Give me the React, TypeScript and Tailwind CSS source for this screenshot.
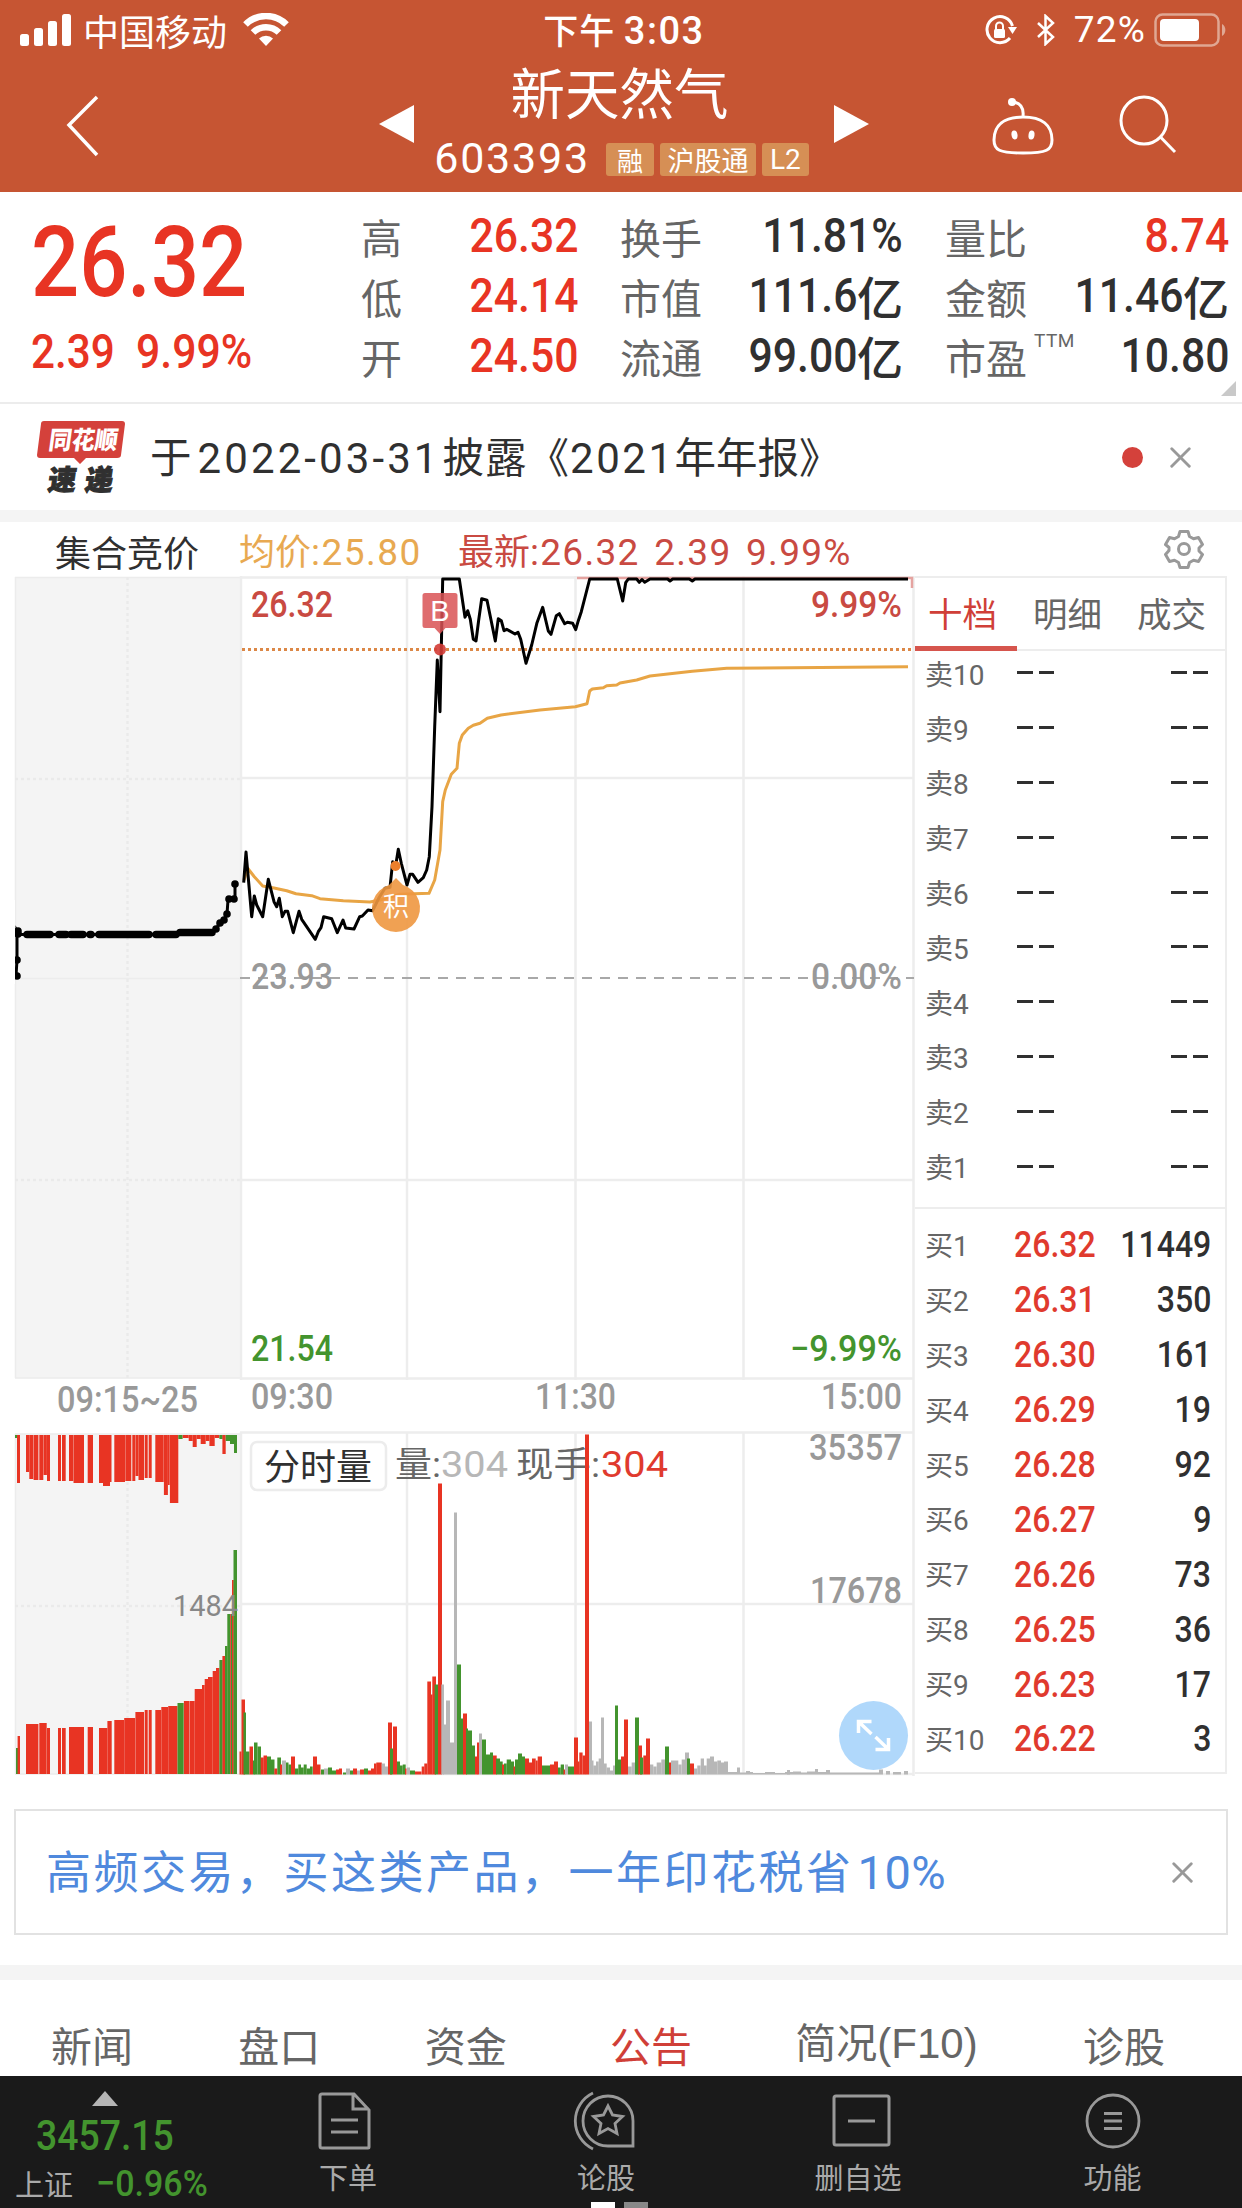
import type { ReactNode } from 'react';
import { X } from 'lucide-react';

type Bar = [x: number, width: number, height: number, color: string];

const RED = '#e83423';
const GREEN = '#43942e';
const GRAY = '#b7b7b7';

const pricePoints =
    '243.7,882.7 246,852 251.7,916.7 254.3,896 256.7,905 262.7,916.7 268.3,879.3 274,901.7 276.7,906.7 279.3,898.3 282.3,916.7 285,911.3 287.7,911.3 293.3,932.7 299,911.3 301.7,919.3 315.3,939.3 318.3,931.7 321,927.7 323.7,916.7 331.7,918.7 337.3,932.7 343,920 345.7,928 354,929 359.7,916.7 362.3,916 368,910 372.7,910.7 378.7,898.3 385,888.3 390,887.3 392.7,861.7 395.3,868 398.3,849.3 401.3,863.3 407,885 410,874.3 412.7,874.3 418,882.3 423.3,877.7 426.7,870 429.3,856.7 432,806.7 434.7,726.7 437.3,660 440,711.7 442.7,579 459.3,579 465,617.3 467.7,610.7 470.3,619.3 473.3,639.3 476,641 478.7,620 481.7,598.7 487,600.3 495.3,641 498.3,618.7 501.3,620.7 504,630.7 506.7,629.3 515,634 518,632.3 520.7,639.3 526,663.3 531.7,645 537,622.7 542.7,607.3 548.3,631 551,634.3 556.3,615.7 559.3,613.7 564.7,623.7 567.3,622.3 572.7,623.3 575.7,629.7 578.3,620.7 581.3,611.7 589.7,579 617.3,579 622.7,601 625.7,582.7 628.3,579 636.7,579 639.3,582.3 642,579.5 644.7,582.3 650,579 667.7,579 670,581 672.7,579 689.3,579 692.3,581 695,579 908,579';

const averagePoints =
    '244,880 247.7,868.3 254.3,876.7 262.7,886 274,888 286.7,890.7 296,893.7 311.7,895.7 320,898.7 343.3,900.7 370,902 380,900 400,894.3 429,893.3 434.7,880 440,850 442.7,801.7 445.3,790 451.3,774.3 457,768.3 459.3,743.3 462.3,735 468.3,728.3 473.3,725.3 480,723.3 487.3,718.3 501,715 540,710 575.3,706.7 587,703.7 589.7,691 592.3,689 603.3,687.7 606.7,685.7 616.7,685 620,683 636.7,680 650,676 692.3,671.3 726.7,668.3 908,666.7';

const auctionPoints = '16,976 17,960 17,931 19,934.5 179,934.5 181,932.5 212,932.5 218,926 224,920 227,914 228,900 235,899 235,884';
const auctionThick = [
    [25, 52, 934.5], [57, 68, 934.5], [69, 85, 934.5], [88, 93, 934.5], [97, 151, 934.5], [154, 178, 934.5], [178, 214, 932.5],
];
const auctionDots = [[17, 976], [17, 960], [18, 931], [18, 934], [216, 929], [220, 923], [224, 920], [227, 914], [229, 899], [234, 899], [235, 884]];

// one bar per minute, measured from the bottom of the pane
const volumeBars: Bar[] = [
    [239.5, 2, 23, RED], [241.5, 3.5, 75, RED], [243.5, 2.5, 62, GREEN], [246, 3.5, 23, GREEN], [249.5, 3.5, 28, RED],
    [253, 1.5, 14, GREEN], [254, 3.5, 32, GREEN], [257.5, 3.5, 28, GREEN], [260.7, 3, 17, RED], [263.5, 3.5, 19, RED],
    [267, 4, 18, GREEN], [271, 3.5, 15, GREEN], [274.3, 3, 6, RED], [277.3, 3.7, 17, GREEN], [280, 2, 10, RED],
    [282, 4, 14, GRAY], [286, 2.5, 12, GREEN], [288.5, 2.5, 10, GREEN], [291, 4, 18, RED], [295, 3.3, 6, GREEN],
    [298.3, 2.7, 10, GREEN], [301, 2.7, 7, GREEN], [303.7, 3, 10, GREEN], [306.7, 3.3, 6, GREEN], [310, 2.7, 8, GREEN],
    [313, 4, 18, RED], [317, 3.5, 10, RED], [321, 3, 5, GREEN], [324, 4, 6, GRAY], [328, 4, 7, GREEN], [332, 4, 4, GREEN],
    [336, 3, 5, RED], [339, 3, 6, RED], [343, 3, 2, GREEN], [346, 4, 6, GRAY], [350, 3, 4, GREEN], [353, 4, 6, RED],
    [357, 3, 4, GRAY], [360, 4, 5, RED], [364, 4, 6, GREEN], [368, 3, 4, RED], [371, 3, 6, RED], [374, 2.5, 11, RED],
    [376.3, 5.5, 12, RED], [381.7, 3.3, 11, GRAY], [385, 3, 8, GRAY], [388, 4, 52, RED], [390, 3, 26, GREEN],
    [393, 4, 48, RED], [397, 3, 13, GREEN], [400, 2.7, 9, GREEN], [402.7, 3, 10, GREEN], [405, 1.5, 6, RED],
    [407, 3, 7, GRAY], [410, 5, 4, GREEN], [415, 6.5, 3, RED], [421.7, 2.7, 8, RED], [424.3, 3, 11, RED],
    [427.3, 3.7, 93, RED], [431, 1.5, 80, RED], [432.3, 3.7, 98, RED], [434.7, 3.3, 90, GREEN], [438, 4, 291, RED],
    [441.3, 2.7, 90, GRAY], [443, 3, 50, GRAY], [446, 4, 74, GRAY], [450, 4, 32, GRAY], [454, 3, 262, GRAY],
    [457, 4, 110, GREEN], [461, 2.3, 56, GREEN], [463, 4, 61, RED], [466, 2, 46, GREEN], [468, 4, 44, GREEN],
    [472, 3, 29, GREEN], [475, 2.3, 18, RED], [477, 2, 32, RED], [479, 3, 41, GRAY], [482, 4, 35, GREEN],
    [486, 4, 20, GREEN], [490, 3, 22, GREEN], [493, 3.7, 19, RED], [496, 4, 16, GREEN], [500, 2.7, 13, GREEN],
    [502, 2, 10, RED], [504, 2.7, 11, GREEN], [506.7, 4.3, 15, GREEN], [511, 3, 13, GREEN], [513.5, 2, 8, RED],
    [515, 3, 15, GREEN], [518, 4, 21, GREEN], [522, 3, 18, GREEN], [525, 4, 16, RED], [529, 3, 12, RED],
    [532, 3.7, 16, RED], [535.7, 2, 14, RED], [537.7, 4.3, 18, RED], [542, 8, 9, GREEN], [550, 4, 10, RED],
    [554, 4, 13, RED], [558, 2.7, 7, GREEN], [560.7, 3.3, 10, GREEN], [563.5, 2, 5, RED], [565, 3, 10, GRAY],
    [568, 6, 8, GREEN], [574, 4, 37, RED], [578, 1.5, 13, RED], [579.3, 3.3, 22, RED], [582.6, 2.6, 19, RED],
    [585, 4, 340, RED], [589, 3, 53, GRAY], [592, 1.5, 14, GRAY], [593.3, 2.7, 9, GRAY], [596, 2.7, 13, GRAY],
    [598.7, 2.3, 16, GRAY], [601, 3, 57, GRAY], [604, 2.7, 11, GRAY], [606.7, 3.3, 7, GRAY], [610, 4, 4, GRAY],
    [613, 2, 9, GRAY], [615, 3, 69, GREEN], [618, 3, 15, GREEN], [621, 3, 18, RED], [624, 4, 55, RED],
    [628, 3.7, 8, GRAY], [631.7, 3.3, 12, GRAY], [635, 4, 57, GREEN], [638.3, 3.7, 29, RED], [640, 3.3, 17, GREEN],
    [643.3, 2.7, 19, RED], [646, 4, 36, RED], [650, 3.3, 10, GRAY], [653.3, 3.3, 8, GRAY], [656.7, 4.7, 12, GRAY],
    [661.3, 3.7, 15, GRAY], [665, 4, 28, GREEN], [669, 2, 12, RED], [671, 7.3, 14, GRAY], [678.3, 3.3, 10, GRAY],
    [681.7, 3.3, 15, GRAY], [685, 4, 22, GRAY], [687, 3, 16, GREEN], [690, 4, 11, RED], [694, 3.3, 6, GRAY],
    [697.3, 3.3, 9, GRAY], [700.7, 3.3, 16, GRAY], [704, 2.7, 9, GRAY], [706.7, 3.3, 16, GRAY], [710, 4, 18, GRAY],
    [714, 3.3, 13, GRAY], [717.3, 3.7, 14, GRAY], [721, 3, 12, GRAY], [724, 4, 13, GRAY], [728, 9, 2.5, GRAY],
    [737, 3, 7, GRAY], [740, 6, 2, GRAY], [746, 4, 3.5, GRAY], [750, 3, 2.5, GRAY], [753, 12, 1.5, GRAY], [765, 10, 2.5, GRAY],
    [775, 10, 1.5, GRAY], [785, 8, 2.5, GRAY], [787, 3, 4.5, GRAY], [793, 8, 3, GRAY], [801, 6, 2, GRAY], [807, 8, 3, GRAY],
    [815, 3, 5.5, GRAY], [818, 8, 2.5, GRAY], [826, 4, 4.5, GRAY], [830, 12, 2, GRAY], [842, 11, 2, GRAY], [853, 11, 2, GRAY],
    [864, 15, 2, GRAY], [879, 4, 5, GRAY], [886, 4, 3.5, GRAY], [893, 8, 2.5, GRAY], [904, 4, 3.5, GRAY],
];

const auctionUnmatched: Bar[] = [
    [15, 4, 3, GREEN], [17, 3, 48, RED], [26, 3.3, 37, RED], [29.3, 4, 44, RED], [33.6, 4.8, 45, RED], [39.3, 4, 45, RED],
    [43.5, 3.4, 40, RED], [47, 3, 46, RED], [58, 3, 46, RED], [62, 3.7, 46, RED], [69, 4.3, 46, RED], [73.5, 10.5, 48, RED],
    [87.7, 5.3, 48, RED], [99, 4, 48, RED], [103, 7, 51, RED], [110, 1.5, 47, RED], [114.3, 10.7, 47, RED],
    [125.3, 6, 46, RED], [132.3, 3, 46, RED], [135.5, 3, 41, RED], [138.5, 5.5, 45, RED], [144.7, 3, 43, RED],
    [148.7, 3, 43, RED], [155.3, 8.4, 47, RED], [163.9, 4, 60, RED], [168, 1.7, 50, RED], [169.9, 8.4, 68, RED], [178.3, 4.3, 4, GREEN],
    [182.7, 6, 3, RED], [188.7, 4, 6, RED], [192.7, 4, 12, RED], [196.7, 4, 4, RED], [200.7, 5, 9, RED], [205.7, 3.7, 6, RED],
    [209.4, 5.3, 11, RED], [214.7, 4.7, 3, RED], [219.4, 3.3, 4, GREEN], [222.4, 3.3, 19, RED], [225.7, 4.3, 6, GREEN],
    [230, 4, 9, GREEN], [234, 3, 18, GREEN],
];

const auctionMatched: Bar[] = [
    [16, 2, 26, GREEN], [17.6, 2.4, 38, RED], [26, 12.4, 50, RED], [39.3, 7.4, 51, RED], [47, 3, 46, RED], [58, 3, 46, RED],
    [62, 3.7, 46, RED], [69, 15, 47, RED], [87.7, 5.3, 47, RED], [99, 8.4, 46, RED], [107.4, 4.3, 53, RED],
    [114.3, 9.7, 54, RED], [124.2, 11, 56, RED], [135.4, 8.6, 62, RED], [144.7, 3, 64, RED], [148.7, 3, 64, RED],
    [155.3, 5.9, 64, RED], [161.3, 6.7, 67, RED], [168.2, 9.3, 68, RED], [177.5, 6.2, 71, GREEN], [183.9, 5.3, 73, RED],
    [189.5, 5.2, 73, RED], [194.7, 7.3, 85, RED], [202, 2.7, 89, RED], [204.7, 3.3, 95, RED], [208, 4.7, 97, RED],
    [212.7, 3.3, 103, RED], [216, 3.4, 106, RED], [219.4, 3.3, 114, GREEN], [222.4, 3, 118, RED], [225, 2.5, 128, GREEN],
    [227.3, 3, 160, GREEN], [230.2, 1, 160, RED], [231, 1.5, 160, GREEN], [232, 1.8, 194, RED], [233.5, 3.5, 224, GREEN],
];

const metrics = [
    [
        { label: '高', value: '26.32', up: true },
        { label: '低', value: '24.14', up: true },
        { label: '开', value: '24.50', up: true },
    ],
    [
        { label: '换手', value: '11.81%' },
        { label: '市值', value: '111.6', unit: '亿' },
        { label: '流通', value: '99.00', unit: '亿' },
    ],
    [
        { label: '量比', value: '8.74', up: true },
        { label: '金额', value: '11.46', unit: '亿' },
        { label: '市盈', value: '10.80', note: 'TTM' },
    ],
];
const metricWidths = ['w-[217px]', 'w-[283px]', 'w-[284px]'];

const bids = [
    ['26.32', '11449'], ['26.31', '350'], ['26.30', '161'], ['26.29', '19'], ['26.28', '92'],
    ['26.27', '9'], ['26.26', '73'], ['26.25', '36'], ['26.23', '17'], ['26.22', '3'],
];

function Num({ children, className = '' }: { children: ReactNode; className?: string }) {
    return (
        <span className={`inline-block whitespace-nowrap font-['Roboto'] font-medium ${className}`}>{children}</span>
    );
}

function ChartText({ x, y, w, color, size = 36, weight = 500, children }: {
    x: number; y: number; w: number; color: string; size?: number; weight?: number; children: string;
}) {
    return (
        <text x={x} y={y} textLength={w} lengthAdjust="spacingAndGlyphs" fill={color} fontSize={size} fontWeight={weight} fontFamily="Roboto, 'Noto Sans CJK SC', sans-serif">
            {children}
        </text>
    );
}

function StatusBar() {
    return (
        <div className="flex h-[60px] items-center justify-between pl-5 pr-[14px]">
            <div className="flex w-[480px] items-center">
                <svg width="51" height="34" viewBox="0 0 51 34" fill="white">
                    <rect x="0" y="21" width="9" height="12" rx="2.5" />
                    <rect x="14" y="15" width="9" height="18" rx="2.5" />
                    <rect x="28" y="8" width="9" height="25" rx="2.5" />
                    <rect x="42" y="1" width="9" height="32" rx="2.5" />
                </svg>
                <span className="ml-[12px] text-4xl leading-[60px]">中国移动</span>
                <svg className="ml-[16px]" width="46" height="34" viewBox="0 0 46 34">
                    <path d="M2.5 11.5a29 29 0 0 1 41 0" fill="none" stroke="white" strokeWidth="6.5" />
                    <path d="M10 19.5a18.5 18.5 0 0 1 26 0" fill="none" stroke="white" strokeWidth="6.5" />
                    <path d="M23 33l-7-7.5a10 10 0 0 1 14 0z" fill="white" />
                </svg>
            </div>
            <span className="whitespace-nowrap text-[35px] font-medium leading-[62px] tracking-wide">
                下午 <span className="font-['Roboto'] text-[38px] tracking-[1.5px]">3:03</span>
            </span>
            <div className="flex w-[480px] items-center justify-end">
                <svg width="34" height="32" viewBox="0 0 34 32">
                    <path d="M26 24a13 13 0 1 1 2.5-12" fill="none" stroke="white" strokeWidth="3" />
                    <path d="M24 13h9l-4.5 7z" fill="white" />
                    <rect x="10" y="15" width="11" height="9" rx="1.5" fill="white" />
                    <path d="M12 16v-4a3.500 3.500 0 0 1 7 0v4" fill="none" stroke="white" strokeWidth="2" />
                </svg>
                <svg className="ml-[18px]" width="20" height="32" viewBox="0 0 20 32">
                    <path d="M2 9l15 14-7.5 7V2l7.5 7L2 23" fill="none" stroke="white" strokeWidth="2.5" />
                </svg>
                <span className="ml-[18px] font-['Roboto'] text-[37px] leading-[62px] tracking-[1.2px]">72%</span>
                <svg className="ml-[8px]" width="74" height="34" viewBox="0 0 74 34">
                    <rect x="1.5" y="1.5" width="63" height="31" rx="7" fill="none" stroke="#e0a793" strokeWidth="2.5" />
                    <rect x="6" y="6" width="39" height="22" rx="4" fill="white" />
                    <path d="M68 11a7 7 0 0 1 0 12z" fill="#e0a793" />
                </svg>
            </div>
        </div>
    );
}

function Header() {
    return (
        <header className="h-[192px] bg-[#c65533] text-white">
            <StatusBar />
            <div className="flex h-[132px]">
                <svg className="ml-[64px] mt-[34px]" width="38" height="64" viewBox="0 0 38 64">
                    <path d="M33 3L5 31l28 30" fill="none" stroke="white" strokeWidth="3.5" />
                </svg>
                <svg className="ml-[277px] mt-[45px]" width="35" height="38" viewBox="0 0 35 38">
                    <path d="M0 19L35 0v38z" fill="white" />
                </svg>
                <div className="flex w-[420px] flex-col items-center pr-[5px]">
                    <div className="mr-[4px] h-[64px] text-[54.5px] leading-[61px]">新天然气</div>
                    <div className="flex h-[66px] items-center gap-[6px] pt-[8px]">
                        <span className="mr-[10px] mt-[-5px] font-['Roboto'] text-[43px] tracking-[1.8px]">603393</span>
                        <span className="mt-[-4px] h-[33px] rounded-[3px] bg-[#d68f55] px-[11px] text-[26px] leading-[33px]">融</span>
                        <span className="mt-[-4px] h-[33px] rounded-[3px] bg-[#d68f55] px-[7.5px] text-[27px] leading-[33px]">沪股通</span>
                        <span className="mt-[-4px] h-[33px] rounded-[3px] bg-[#d68f55] px-[8px] font-['Roboto'] text-[28px] leading-[33px]">L2</span>
                    </div>
                </div>
                <svg className="mt-[45px]" width="35" height="38" viewBox="0 0 35 38">
                    <path d="M35 19L0 0v38z" fill="white" />
                </svg>
                <svg className="ml-[123px] mt-[37px]" width="62" height="60" viewBox="0 0 62 60">
                    <path d="M31 20c19 0 29 8 29 23 0 10-5 13-29 13S2 53 2 43c0-15 10-23 29-23z" fill="none" stroke="white" strokeWidth="3" />
                    <path d="M31 19c1-8-3-14-11-14" fill="none" stroke="white" strokeWidth="3" />
                    <circle cx="20" cy="5" r="4" fill="white" />
                    <ellipse cx="22.500" cy="38" rx="3" ry="4.500" fill="white" transform="rotate(-8 22 38)" />
                    <ellipse cx="39.500" cy="38" rx="3" ry="4.500" fill="white" transform="rotate(8 39 38)" />
                </svg>
                <svg className="ml-[65px] mt-[35px]" width="60" height="60" viewBox="0 0 60 60" fill="none" stroke="white" strokeWidth="3">
                    <ellipse cx="25" cy="25.500" rx="23" ry="23.500" />
                    <path d="M41 41.500l15 15.500" />
                </svg>
            </div>
        </header>
    );
}

function Quote() {
    return (
        <section className="flex h-[212px] border-b-2 border-[#ececec]">
            <div className="w-[361px] shrink-0 pl-[31px] text-[#e83423]">
                <div className="mt-[19px] h-[104px]">
                    <Num className="origin-left scale-x-[0.865] text-[98px] leading-[104px]">26.32</Num>
                </div>
                <div className="mt-[9px] flex h-[56px]">
                    <Num className="w-[105px] origin-left scale-x-[0.88] text-[48px] leading-[56px]">2.39</Num>
                    <Num className="origin-left scale-x-[0.89] text-[48px] leading-[56px]">9.99%</Num>
                </div>
            </div>
            {metrics.map((column, i) => (
                <div key={i} className={`${metricWidths[i]} ${i > 0 ? 'ml-[42px]' : ''} shrink-0 pt-[14px]`}>
                    {column.map((m) => (
                        <div key={m.label} className="flex h-[60px] items-center justify-between whitespace-nowrap">
                            <span className="flex text-[41px] leading-[60px] text-[#666]">
                                {m.label}
                                {'note' in m && <sup className="top-0 ml-[7px] mt-[5px] font-['Roboto'] text-[19px] leading-5 tracking-[0.5px]">{m.note}</sup>}
                            </span>
                            <span className={`flex text-[42px] font-medium leading-[60px] ${'up' in m ? 'text-[#e83423]' : 'text-[#303030]'}`}>
                                <Num className="origin-right scale-x-[0.89] text-[48px] leading-[58px]">{m.value}</Num>
                                {'unit' in m && <span className="w-[46px] text-[46px] leading-[56px]">{m.unit}</span>}
                            </span>
                        </div>
                    ))}
                </div>
            ))}
            <svg className="-ml-[8px] mt-[189px] shrink-0" width="15" height="15" viewBox="0 0 15 15">
                <path d="M15 0v15H0z" fill="#c9c9c9" />
            </svg>
        </section>
    );
}

function News() {
    return (
        <section className="flex h-[118px] items-center border-b-[12px] border-[#f4f4f4] pr-[44px]">
            <svg className="ml-[36px] overflow-visible" width="92" height="76" viewBox="0 0 92 76" fontFamily="'Noto Sans CJK SC', sans-serif" fontWeight="900">
                <path d="M8 2h78q3 0 3 3l-4 31q0 3-4 3H50l-6 6-6-6H4q-3 0-3-3L5 5q0-3 3-3z" fill="#d4413b" />
                <text x="16" y="30" fontSize="25" fill="white" textLength="69" lengthAdjust="spacingAndGlyphs" transform="skewX(-8)">同花顺</text>
                <text x="21" y="71" fontSize="28" fill="#303030" stroke="#303030" strokeWidth="1" textLength="65" lengthAdjust="spacing" transform="skewX(-8)">速递</text>
            </svg>
            <p className="ml-[22px] flex-1 whitespace-nowrap text-[41.5px] text-[#303030]">
                于<span className="ml-[6px] mr-[2px] font-['Roboto'] text-[42px] tracking-[3.1px]">2022-03-31</span>
                <span className="tracking-[1px]">披露《</span>
                <span className="font-['Roboto'] text-[42px] tracking-[2.5px]">2021</span>年年报》
            </p>
            <span className="mr-[20px] size-[21px] rounded-full bg-[#d4413b]" />
            <X className="size-[35px] text-[#999]" strokeWidth={2} />
        </section>
    );
}

function ChartLegend() {
    return (
        <div className="flex h-[54px] items-center whitespace-nowrap pt-[4px] text-[36px] leading-[54px]">
            <span className="ml-[55px] w-[184px] text-[#303030]">集合竞价</span>
            <span className="w-[219px] text-[#e8a951]">均价<span className="font-['Roboto'] text-[37px] tracking-[1.5px]">:25.80</span></span>
            <span className="flex-1 text-[#c94a42]">最新<span className="font-['Roboto'] text-[37px] tracking-[1.3px] [word-spacing:4px]">:26.32&nbsp;2.39&nbsp;9.99%</span></span>
            <svg className="mr-[38px] mt-[-4px]" width="40" height="40" viewBox="0 0 40 40" fill="none" stroke="#999" strokeWidth="3" strokeLinejoin="round">
                <path d="M16 2.500h8l1.500 5 4 2.300 5-1.300 4 7-3.500 3.500v3l3.500 3.500-4 7-5-1.300-4 2.300-1.500 5h-8l-1.500-5-4-2.300-5 1.300-4-7L5 21.500v-3L1.500 15.500l4-7 5 1.300 4-2.300z" />
                <circle cx="20" cy="20" r="5.500" />
            </svg>
        </div>
    );
}

function Charts() {
    return (
        <svg className="shrink-0" width="915" height="1200" viewBox="0 576 915 1200">
            {/* call auction panes */}
            <rect x="15" y="577" width="225" height="801" fill="#f4f4f4" />
            <rect x="15" y="1434" width="225" height="340" fill="#f4f4f4" />
            <g stroke="#eaeaea" strokeWidth="1.5">
                <path d="M15.500 577V1378M15 577.500H240M15 978.500H240M15 1378H240M15.500 1434V1774M15 1434H240M15 1774H240" fill="none" stroke="#ececec" />
                <path d="M127.500 577V1378M127.500 1434V1774M15 779H240M15 1180H240M15 1606H240" strokeDasharray="3 3" strokeWidth="2.5" />
            </g>

            {/* grid */}
            <path
                d="M241 576V1380M407 576V1380M575.500 576V1380M743.500 576V1380M913.500 576V1776M241 577.500H914M241 778H914M241 1180H914M240 1378.500H914M241 1432V1774M407 1432V1774M575.500 1432V1774M743.500 1432V1774M240 1432.500H914M241 1604H914M241 1774H914"
                fill="none"
                stroke="#ededed"
                strokeWidth="2.5"
            />
            <path d="M240 978H914" stroke="#a8a8a8" strokeWidth="1.8" strokeDasharray="10 8" />
            <path d="M242 649.500H913" stroke="#dc8847" strokeWidth="3" strokeDasharray="3 3" />
            <path d="M577 578H912v10" fill="none" stroke="#e5a3a0" strokeWidth="2.5" />

            {/* price lines */}
            <polyline points={auctionPoints} fill="none" stroke="black" strokeWidth="3" />
            {auctionThick.map(([x1, x2, y]) => (
                <line key={x1} x1={x1 + 2} x2={x2 - 2} y1={y} y2={y} stroke="black" strokeWidth="7.5" strokeLinecap="round" />
            ))}
            {auctionDots.map(([cx, cy], i) => (
                <circle key={i} cx={cx} cy={cy} r="3.8" />
            ))}
            <rect x="8" y="900" width="7" height="84" fill="white" />
            <polyline points={averagePoints} fill="none" stroke="#e8a545" strokeWidth="3" strokeLinejoin="round" />
            <polyline points={pricePoints} fill="none" stroke="black" strokeWidth="3" strokeLinejoin="round" />

            {/* markers */}
            <path d="M425 593h30q2.500 0 2.500 2.500v30q0 2.500-2.500 2.500h-9.500l-5.500 6-5.500-6H425q-2.500 0-2.500-2.500v-30q0-2.500 2.500-2.500z" fill="#d95255" fillOpacity=".85" />
            <text x="440" y="621" textAnchor="middle" fill="white" fontSize="29" fontFamily="Liberation Sans, sans-serif">B</text>
            <circle cx="440" cy="649.500" r="6" fill="#d33c36" fillOpacity=".9" />
            <circle cx="395.500" cy="866" r="5" fill="#ec7f2c" />
            <path d="M396 878l7 7a24 24 0 1 1-14 0z" fill="#ee9740" fillOpacity=".9" />
            <text x="396" y="916" textAnchor="middle" fill="white" fontSize="26" fontFamily="'Noto Sans CJK SC', sans-serif">积</text>

            <ChartText x={251} y={617} w={82} color="#c94a42">26.32</ChartText>
            <ChartText x={811} y={617} w={91} color="#c94a42">9.99%</ChartText>
            <ChartText x={251} y={989} w={82} color="#999">23.93</ChartText>
            <ChartText x={811} y={989} w={91} color="#999">0.00%</ChartText>
            <ChartText x={251} y={1361} w={82} color={GREEN}>21.54</ChartText>
            <ChartText x={790} y={1361} w={112} color={GREEN}>−9.99%</ChartText>
            <ChartText x={57} y={1412} w={141} color="#999">09:15~25</ChartText>
            <ChartText x={251} y={1409} w={82} color="#999">09:30</ChartText>
            <ChartText x={535} y={1409} w={81} color="#999">11:30</ChartText>
            <ChartText x={821} y={1409} w={81} color="#999">15:00</ChartText>

            {/* volume panes */}
            {auctionUnmatched.map(([x, w, h, fill]) => (
                <rect key={x} x={x} y={1435} width={w} height={h} fill={fill} />
            ))}
            {auctionMatched.map(([x, w, h, fill]) => (
                <rect key={x} x={x} y={1774 - h} width={w} height={h} fill={fill} />
            ))}
            <ChartText x={173} y={1616} w={65} color="#888" size={30} weight={400}>1484</ChartText>

            <rect x="251" y="1442" width="135" height="48" rx="6" fill="white" stroke="#ececec" strokeWidth="2.5" />
            <ChartText x={264} y={1480} w={108} color="#303030" weight={400}>分时量</ChartText>
            <ChartText x={395} y={1477} w={46} color="#666" size={35} weight={400}>量:</ChartText>
            <ChartText x={441} y={1477} w={67} color="#b7b7b7" weight={400}>304</ChartText>
            <ChartText x={516} y={1477} w={84} color="#666" size={35} weight={400}>现手:</ChartText>
            {volumeBars.map(([x, w, h, fill]) => (
                <rect key={x} x={x} y={1774.5 - h} width={w} height={h} fill={fill} />
            ))}
            <ChartText x={601} y={1477} w={67} color="#e03a2e" weight={400}>304</ChartText>
            <ChartText x={809} y={1460} w={93} color="#999">35357</ChartText>
            <ChartText x={810} y={1603} w={92} color="#999">17678</ChartText>

            <circle cx="873.500" cy="1735.500" r="34.500" fill="#b0d8fb" />
            <path d="M858.500 1733v-11.500h13M860 1723l11.500 11M888.500 1738v11.500h-13M887 1748l-11.500-11" fill="none" stroke="white" strokeWidth="3.5" />
        </svg>
    );
}

function Dashes() {
    return (
        <span className="flex gap-[6px]">
            <i className="h-[3px] w-[15.5px] bg-[#303030]" />
            <i className="h-[3px] w-[15.5px] bg-[#303030]" />
        </span>
    );
}

function OrderBook() {
    return (
        <div className="h-[1198px] w-[312px] border-r-2 border-b-2 border-t-2 border-[#ededed]">
            <div className="flex h-[73px] border-b-2 border-[#ededed] text-[34.5px] leading-[68px] text-[#666]">
                <span className="h-[73px] w-[102px] border-b-[5px] border-[#d6554d] pl-[13px] text-[#d03f38]">十档</span>
                <span className="w-[105px] pl-[16px]">明细</span>
                <span className="pl-[15px]">成交</span>
            </div>
            <div className="-mt-[4px] h-[562px] border-b-2 border-[#ededed]">
                {[10, 9, 8, 7, 6, 5, 4, 3, 2, 1].map((n) => (
                    <div key={n} className="flex h-[54.8px] items-center pl-[10px] pr-[17px] text-[28px] text-[#666]">
                        <span className="w-[92px]">卖<span className="font-['Roboto']">{n}</span></span>
                        <span className="flex flex-1 justify-between pb-[3px]"><Dashes /><Dashes /></span>
                    </div>
                ))}
            </div>
            <div className="pt-[9px]">
                {bids.map(([price, amount], i) => (
                    <div key={price} className="flex h-[54.9px] items-center justify-between pl-[10px] pr-[14px] text-[28px] text-[#666]">
                        <span className="w-[89px]">买<span className="font-['Roboto']">{i + 1}</span></span>
                        <Num className="flex-1 origin-left scale-x-[0.89] text-[36px] text-[#e03a2e]">{price}</Num>
                        <Num className="origin-right scale-x-[0.89] text-[36px] text-[#303030]">{amount}</Num>
                    </div>
                ))}
            </div>
        </div>
    );
}

function Toolbar() {
    return (
        <nav className="relative flex h-[132px] bg-[#1a1a1a] text-[29px] text-[#aaa]">
            <div className="w-[222px] pl-[15px]">
                <svg className="ml-[77px] mt-[15px]" width="26" height="15" viewBox="0 0 26 15">
                    <path d="M13 0l13 15H0z" fill="#b5b5b5" />
                </svg>
                <Num className="ml-[21px] h-[52px] origin-left scale-x-[0.89] text-[42px] leading-[60px] text-[#43942e]">3457.15</Num>
                <div className="flex h-[50px] leading-[47px]">
                    <span className="w-[81px]">上证</span>
                    <Num className="origin-left scale-x-[0.92] text-[37px] leading-[47px] text-[#43942e]">−0.96%</Num>
                </div>
            </div>
            <div className="flex w-[252px] flex-col items-center">
                <svg className="mt-[15px] -ml-[6px]" width="58" height="60" viewBox="0 0 58 60" fill="none" stroke="#999" strokeWidth="3">
                    <path d="M6 3h32l15 16v37q0 1-1 1H6q-2 0-2-2V5q0-2 2-2zM37 3v15h16M15 29h27M15 41h27" />
                </svg>
                <span className="mt-[3px] leading-[44px]">下单</span>
            </div>
            <div className="flex w-[264px] flex-col items-center">
                <svg className="mt-[15px] -ml-[5px]" width="64" height="60" viewBox="0 0 64 60" fill="none" stroke="#999" strokeWidth="2.8">
                    <path d="M21 2a31 31 0 0 0 0 56M61 55V30a25 25 0 1 0-25 25z" />
                    <path d="M36 15l4.500 9 10 1.500-7.500 7 2 10-9-5-9 5 2-10-7.500-7 10-1.500z" />
                </svg>
                <span className="mt-[3px] leading-[44px]">论股</span>
            </div>
            <div className="flex w-[242px] flex-col items-center">
                <svg className="mt-[15px] ml-[3px]" width="60" height="60" viewBox="0 0 60 60" fill="none" stroke="#999" strokeWidth="3">
                    <rect x="3" y="5" width="55" height="49" rx="2" />
                    <path d="M17 30h27" />
                </svg>
                <span className="mt-[3px] mr-[2px] leading-[44px]">删自选</span>
            </div>
            <div className="flex flex-1 flex-col items-center pl-[3px]">
                <svg className="mt-[15px]" width="58" height="60" viewBox="0 0 58 60" fill="none" stroke="#999" strokeWidth="2.8">
                    <circle cx="29" cy="30" r="26" />
                    <path d="M20 22.500h18M20 30h18M20 37.500h18" />
                </svg>
                <span className="mt-[3px] leading-[44px]">功能</span>
            </div>
            <div className="absolute bottom-0 left-[591px] flex gap-[9px]">
                <i className="h-[6px] w-[24px] bg-white" />
                <i className="h-[6px] w-[24px] bg-[#888]" />
            </div>
        </nav>
    );
}

export default function App() {
    return (
        <div className="flex h-[2208px] w-[1242px] flex-col overflow-hidden bg-white font-['Noto_Sans_CJK_SC',sans-serif]">
            <Header />
            <Quote />
            <News />
            <ChartLegend />
            <div className="flex">
                <Charts />
                <OrderBook />
            </div>
            <div className="mx-[14px] mt-[33px] flex h-[126px] items-center justify-between border-2 border-[#e2e2e2] pl-[30px] pr-[26px]">
                <span className="whitespace-nowrap text-[45px] tracking-[2.5px] text-[#4f89dd]">
                    高频交易，买这类产品，一年印花税省<span className="ml-[4px] font-['Roboto'] text-[47px] tracking-[0.5px]">10%</span>
                </span>
                <X className="size-[35px] text-[#999]" strokeWidth={2} />
            </div>
            <div className="mt-[30px] h-[15px] shrink-0 bg-[#f4f4f4]" />
            <div className="flex flex-1 items-end justify-between pb-[2px] pl-[51px] pr-[77px] text-[41px] leading-[60px] text-[#666]">
                <span>新闻</span>
                <span>盘口</span>
                <span className="-ml-[1px]">资金</span>
                <span className="-ml-[2px] text-[#d03f38]">公告</span>
                <span className="-ml-[2px]">简况<span className="font-['Liberation_Sans'] text-[42px]">(F10)</span></span>
                <span>诊股</span>
            </div>
            <Toolbar />
        </div>
    );
}
